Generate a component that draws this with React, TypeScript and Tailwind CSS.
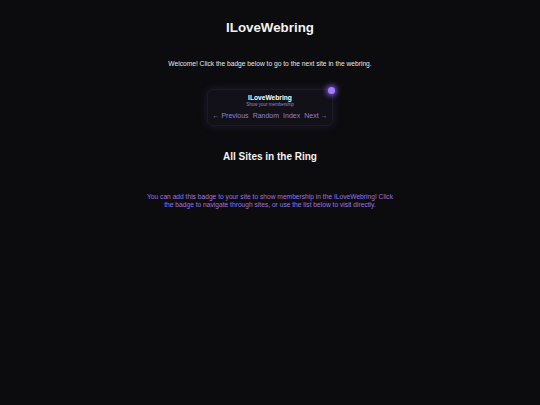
import React from "react"

const navLinks = ["← Previous", "Random", "Index", "Next →"]

function Badge() {
    return (
        <div className="relative mt-[21px] w-[126px] rounded-[6px] border border-[#1d1a28] bg-[#121118] px-[4px] pt-[4px] pb-[5px] shadow-[0_0_10px_rgba(124,92,230,0.18)]">
            <span className="absolute -top-[3px] -right-[3px] size-[7px] rounded-full bg-[#a67cff] shadow-[0_0_5px_2px_rgba(150,100,255,0.7)]" />
            <div className="text-center text-[6.67px] font-bold leading-[8px] text-white">ILoveWebring</div>
            <div className="text-center text-[4.5px] leading-[5px] text-[#9488c8]">Show your membership</div>
            <div className="mt-[3.5px] flex justify-center gap-[4px] whitespace-nowrap text-[7px] leading-[9px] text-[#8f80d8]">
                {navLinks.map(link => (
                    <span key={link}>{link}</span>
                ))}
            </div>
        </div>
    )
}

export default function App() {
    return (
        <div className="flex min-h-screen flex-col items-center bg-[#0c0c0e] font-['Liberation_Sans',Arial,sans-serif] text-white">
            <h1 className="mt-[20px] text-[13.33px] font-bold leading-[16px] text-[#f2f2f2]">ILoveWebring</h1>
            <p className="mt-[24px] text-[6.67px] leading-[8px] text-[#e6e6e6]">
                Welcome! Click the badge below to go to the next site in the webring.
            </p>
            <Badge />
            <h2 className="mt-[25px] text-[10px] font-bold leading-[12px] text-[#f2f2f2]">All Sites in the Ring</h2>
            <p className="mt-[30px] max-w-[254px] text-center text-[6.67px] leading-[8.5px] text-[#9a72e8]">
                You can add this badge to your site to show membership in the ILoveWebring! Click the badge to navigate through sites, or use the list below to visit directly.
            </p>
        </div>
    )
}
